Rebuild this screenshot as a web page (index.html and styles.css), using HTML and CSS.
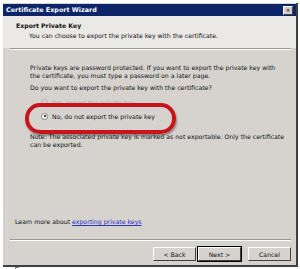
FILE: index.html
```html
<!DOCTYPE html>
<html lang="en">
<head>
    <meta charset="UTF-8">
    <link rel="stylesheet" href="styles.css">
    <title>Certificate Export Wizard</title>
</head>
<body>
    <div class="window">
        <div class="titlebar">
            <span class="title">Certificate Export Wizard</span>
            <span class="close">&#x2715;</span>
        </div>
        <div class="header">
            <div class="heading">Export Private Key</div>
            <div class="subheading">You can choose to export the private key with the certificate.</div>
        </div>
        <div class="rule"></div>
        <div class="content">
            <p class="intro">Private keys are password protected. If you want to export the private key with the certificate, you must type a password on a later page.</p>
            <p class="question">Do you want to export the private key with the certificate?</p>
            <div class="options">
                <label class="option disabled"><span class="radio"></span>Yes, export the private key</label>
                <label class="option"><span class="radio checked"></span>No, do not export the private key</label>
            </div>
            <p class="note">Note: The associated private key is marked as not exportable. Only the certificate can be exported.</p>
            <p class="learn">Learn more about <a href="#">exporting private keys</a></p>
            <div class="highlight"></div>
        </div>
        <div class="rule"></div>
        <div class="footer">
            <button>&lt; Back</button>
            <button class="default">Next &gt;</button>
            <button class="cancel">Cancel</button>
        </div>
    </div>
    <div class="corner"></div>
</body>
</html>
```

FILE: styles.css
```css
body {
    margin: 0;
    background-color: #fff;
    font-family: 'DejaVu Sans', Verdana, sans-serif;
    font-size: 6.2px;
    color: #111;
}

.window {
    margin: 3px 0 0 3px;
    width: 293px;
    height: 262px;
    background-color: #d6d3ce;
    border-right: 2px solid #404040;
    border-bottom: 2px solid #404040;
    display: flex;
    flex-direction: column;
}

.titlebar {
    height: 12px;
    margin-top: 1px;
    background-color: #0c2468;
    display: flex;
    align-items: center;
    justify-content: space-between;
    padding: 0 3px;
}

.title {
    color: #fff;
    font-weight: bold;
    font-size: 6.4px;
}

.close {
    width: 8px;
    height: 7px;
    background-color: #d4d0c8;
    border: 1px solid #fff;
    border-right-color: #404040;
    border-bottom-color: #404040;
    font-size: 5px;
    line-height: 7px;
    text-align: center;
    color: #000;
    font-weight: bold;
}

.header {
    height: 32px;
    background-color: #eae9e5;
    padding: 6px 0 0 13px;
    box-sizing: border-box;
}

.heading {
    font-weight: bold;
    margin-bottom: 3px;
}

.subheading {
    padding-left: 13px;
}

.rule {
    height: 1px;
    margin: 0 5px 0 7px;
    background-color: #9a9892;
    border-bottom: 1px solid #fff;
}

.content {
    flex: 1;
    padding: 14px 10px 0 27px;
    position: relative;
}

.content p {
    margin: 0;
    line-height: 8px;
}

.content .intro {
    margin-bottom: 4px;
}

.options {
    padding: 6px 0 0 11px;
}

.option {
    display: flex;
    align-items: center;
    height: 8px;
    margin-bottom: 6px;
}

.option.disabled {
    color: #a8a6a0;
}

.radio {
    width: 5px;
    height: 5px;
    border-radius: 50%;
    background-color: #fff;
    border: 1px solid #808080;
    margin-right: 4px;
    position: relative;
}

.option.disabled .radio {
    background-color: #d6d3ce;
    border-color: #b0aea8;
}

.radio.checked::after {
    content: '';
    position: absolute;
    left: 1.5px;
    top: 1.5px;
    width: 2px;
    height: 2px;
    border-radius: 50%;
    background-color: #000;
}

.highlight {
    position: absolute;
    left: 22px;
    top: 53px;
    width: 151px;
    height: 31px;
    box-sizing: border-box;
    border: 4px solid #c8141c;
    border-radius: 15px;
    box-shadow: 1px 2px 2px rgba(0, 0, 0, 0.35);
}

.content .note {
    margin-top: 13px;
}

.content .learn {
    margin: 69px 0 0 -15px;
}

.learn a {
    color: #2a30c8;
}

.footer {
    display: flex;
    justify-content: flex-end;
    padding: 6px 5px 0 0;
    height: 24px;
    box-sizing: border-box;
}

button {
    width: 43px;
    height: 14px;
    margin-left: 2px;
    padding: 0;
    background-color: #d6d3ce;
    border: 1px solid #fff;
    border-right-color: #404040;
    border-bottom-color: #404040;
    font-family: 'DejaVu Sans', Verdana, sans-serif;
    font-size: 6.2px;
    color: #111;
}

button.default {
    outline: 1px solid #000;
}

button.cancel {
    margin-left: 7px;
}

.corner {
    width: 3px;
    height: 2px;
    margin-left: 15px;
    border-top: 1px solid #888;
    border-left: 1px solid #888;
}
```
